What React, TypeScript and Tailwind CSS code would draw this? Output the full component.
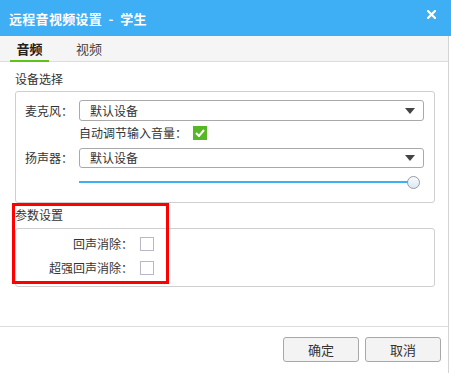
import React from "react";

const font = { fontFamily: '"Noto Sans CJK SC", "Noto Sans", sans-serif' };

function Select({ value }: { value: string }) {
  return (
    <div className="flex-1 h-full border border-[#a9a9a9] rounded-[3px] bg-white flex items-center pl-[10px] pr-[8px] text-[12px] text-[#333] leading-none">
      <span className="flex-1">{value}</span>
      <svg width="10" height="6" viewBox="0 0 10 6">
        <polygon points="0,0 10,0 5,6" fill="#444" />
      </svg>
    </div>
  );
}

function Box() {
  return <div className="w-[14px] h-[14px] border border-[#b8b8c8] bg-white" />;
}

function Button({ label }: { label: string }) {
  return (
    <div className="w-[76px] h-[25px] border border-[#a8a8a8] rounded-[3px] bg-[#f3f3f3] flex items-center justify-center text-[13px] text-[#333] leading-none">
      {label}
    </div>
  );
}

export default function App() {
  return (
    <div className="w-[451px] h-[373px] bg-white relative overflow-hidden" style={font}>
      {/* Title bar */}
      <div className="h-[36px] bg-[#3eaef5] flex items-center justify-between pl-[9px] pr-[15px]">
        <span className="text-white font-bold text-[13px] leading-none tracking-[0.3px]">远程音视频设置 &nbsp;-&nbsp; 学生</span>
        <svg width="9" height="9" viewBox="0 0 9 9" className="mb-[8px]">
          <path d="M1 1 L8 8 M8 1 L1 8" stroke="white" strokeWidth="2.2" strokeLinecap="square" />
        </svg>
      </div>
      <div className="flex h-[337px]">
        <div className="w-[449px] border-r border-[#d4d4d4] flex flex-col">
          {/* Tabs */}
          <div className="h-[26px] bg-[#f5f5f5] border-b border-[#dcdcdc] flex items-end pl-[10px]">
            <div className="w-[39px] h-[25px] flex items-center justify-center border-b-2 border-[#5fc21a] -mb-[1px] text-[13px] font-bold text-[#222] leading-none">
              音频
            </div>
            <div className="ml-[27px] h-[25px] flex items-center text-[13px] text-[#444] leading-none">视频</div>
          </div>
          {/* Content */}
          <div className="h-[265px] pl-[15px] pr-[13px] border-b border-[#dcdcdc]">
            <div className="mt-[9px] h-[16px] flex items-center text-[12px] text-[#333] leading-none">设备选择</div>
            <div className="mt-[4px] border border-[#cfcfcf] rounded-[3px] pl-[9px] pr-[10px] pt-[8px] pb-[14px]">
              <div className="h-[21px] flex items-center">
                <span className="w-[54px] text-[12px] text-[#333] leading-none">麦克风：</span>
                <Select value="默认设备" />
              </div>
              <div className="mt-[5px] h-[14px] flex items-center pl-[54px]">
                <span className="w-[114px] text-[12px] text-[#333] leading-none">自动调节输入音量：</span>
                <div className="w-[14px] h-[14px] bg-[#56b824] flex items-center justify-center">
                  <svg width="10" height="8" viewBox="0 0 10 8">
                    <path d="M1 4 L4 7 L9 1" stroke="white" strokeWidth="2" fill="none" />
                  </svg>
                </div>
              </div>
              <div className="mt-[8px] h-[20px] flex items-center">
                <span className="w-[54px] text-[12px] text-[#333] leading-none">扬声器：</span>
                <Select value="默认设备" />
              </div>
              <div className="mt-[8px] h-[12px] flex items-center pl-[54px] pr-[4px]">
                <div className="flex-1 h-[2px] bg-[#3eaef5]" />
                <div className="w-[13px] h-[13px] rounded-full border border-[#9a9a9a] bg-[linear-gradient(#f8fbff,#dbe8f5)] -ml-[6px]" />
              </div>
            </div>
            <div className="mt-[4px] h-[16px] flex items-center text-[12px] text-[#333] leading-none">参数设置</div>
            <div className="mt-[5px] border border-[#cfcfcf] rounded-[3px] pt-[8px] pb-[11px]">
              <div className="h-[14px] flex items-center">
                <span className="w-[117px] text-right text-[12px] text-[#333] leading-none">回声消除：</span>
                <div className="ml-[7px]"><Box /></div>
              </div>
              <div className="mt-[10px] h-[14px] flex items-center">
                <span className="w-[117px] text-right text-[12px] text-[#333] leading-none">超强回声消除：</span>
                <div className="ml-[7px]"><Box /></div>
              </div>
            </div>
          </div>
          {/* Footer */}
          <div className="flex-1 flex justify-end items-start pt-[10px] pr-[7px] gap-[6px]">
            <Button label="确定" />
            <Button label="取消" />
          </div>
        </div>
      </div>
      {/* Red annotation box */}
      <div className="absolute left-[12px] top-[203px] w-[157px] h-[81px] border-[3px] border-[#ff0000]" />
    </div>
  );
}
